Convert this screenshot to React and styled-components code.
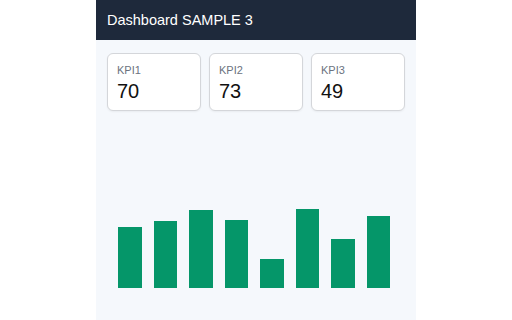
import React from "react";
import styled, { createGlobalStyle } from "styled-components";

const GlobalStyle = createGlobalStyle`
  body {
    margin: 0;
    background: #fff;
    font-family: "Liberation Sans", Arial, sans-serif;
  }
`;

const Panel = styled.div`
  width: 320px;
  min-height: 320px;
  margin: 0 auto;
  background: #f5f8fc;
  display: flex;
  flex-direction: column;
`;

const Header = styled.header`
  height: 40px;
  background: #1e293b;
  color: #fff;
  font-size: 14.5px;
  display: flex;
  align-items: center;
  padding: 0 11px;
`;

const Cards = styled.div`
  display: grid;
  grid-template-columns: repeat(3, 1fr);
  gap: 8px;
  padding: 13px 11px 0;
`;

const Card = styled.div`
  background: #fff;
  border: 1px solid #d4d6da;
  border-radius: 6px;
  box-shadow: 0 1px 2px rgba(0, 0, 0, 0.05);
  padding: 10px 9px 7px;
`;

const Label = styled.div`
  font-size: 11px;
  line-height: 13px;
  color: #6b7280;
`;

const Value = styled.div`
  margin-top: 2px;
  font-size: 20px;
  line-height: 24px;
  color: #111;
`;

const Chart = styled.div`
  height: 160px;
  margin-top: 17px;
  padding: 0 26px 0 22px;
  display: flex;
  align-items: flex-end;
  gap: 12px;
`;

const Bar = styled.div`
  flex: 1;
  background: #059669;
`;

const kpis = [
  { name: "KPI1", value: 70 },
  { name: "KPI2", value: 73 },
  { name: "KPI3", value: 49 },
];

const bars = [61, 67, 78, 68, 29, 79, 49, 72];

export default function App() {
  return (
    <>
      <GlobalStyle />
      <Panel>
        <Header>Dashboard SAMPLE 3</Header>
        <Cards>
          {kpis.map((k) => (
            <Card key={k.name}>
              <Label>{k.name}</Label>
              <Value>{k.value}</Value>
            </Card>
          ))}
        </Cards>
        <Chart>
          {bars.map((h, i) => (
            <Bar key={i} style={{ height: h }} />
          ))}
        </Chart>
      </Panel>
    </>
  );
}
